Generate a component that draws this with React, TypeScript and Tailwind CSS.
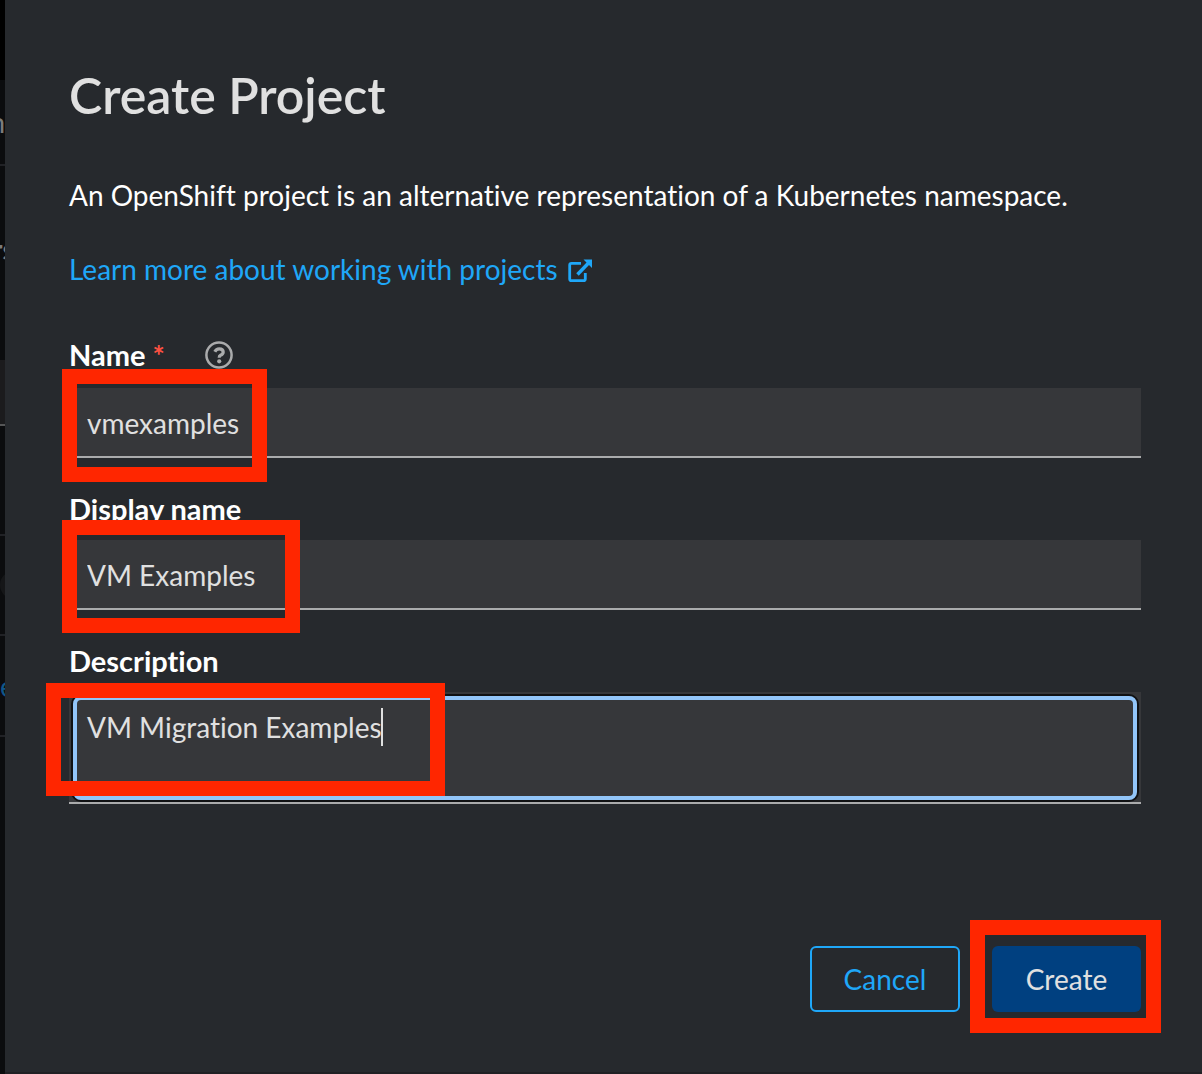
import React from "react";

function Highlight({ className }: { className: string }) {
  return (
    <div
      aria-hidden="true"
      className={`pointer-events-none absolute z-10 h-[113px] border-[15px] border-[#ff2600] ${className}`}
    />
  );
}

const fieldClass =
  "block w-full border-b-2 border-[#aaabac] bg-[#36373a] px-[18px] text-[28px] leading-[42px] text-[#e0e0e0] outline-none";
const labelClass = "font-bold text-[29px] leading-[42px] text-white";

function PageEdge() {
  return (
    <div
      aria-hidden="true"
      className="flex w-[5px] shrink-0 flex-col overflow-hidden bg-[#0b0c0e] text-[28px] leading-[42px]"
    >
      <div className="h-20 shrink-0 bg-black" />
      <div className="flex h-[86px] shrink-0 items-center justify-end border-b-2 border-[#212226] text-[#7c7c7c]">
        n
      </div>
      <div className="h-[194px] shrink-0 pt-[62px] font-bold text-[#7c7c7c]">
        <span className="-ml-2">rs</span>
      </div>
      <div className="h-[66px] shrink-0 border-b-2 border-[#555657] bg-[#1b1b1d]" />
      <div className="h-[110px] shrink-0 border-b-2 border-[#212226]" />
      <div className="flex h-[100px] shrink-0 items-center border-b-2 border-[#212226]">
        <div className="size-7 shrink-0 rounded-full bg-[#151618]" />
      </div>
      <div className="flex h-[101px] shrink-0 items-center border-b-2 border-[#212226] text-[#10568a]">e</div>
    </div>
  );
}

export default function App() {
  return (
    <div className="flex min-h-screen bg-[#26292d] font-['Lato','Noto_Sans',sans-serif] [font-variant-ligatures:none]">
      <PageEdge />
      <main
        role="dialog"
        aria-labelledby="dialog-title"
        className="min-w-0 flex-1 border-b-2 border-[#202024] pt-16 pr-[61px] pb-[60px] pl-16"
      >
        <h1 id="dialog-title" className="text-[50px] leading-[62px] font-semibold text-[#e0e0e0]">
          Create Project
        </h1>
        <p className="mt-12 text-[28px] leading-[42px] text-white">
          An OpenShift project is an alternative representation of a Kubernetes namespace.
        </p>
        <p className="mt-8 text-[28px] leading-[42px]">
          <a href="#projects" className="inline-flex items-center gap-[10px] text-[#1fa7f8]">
            Learn more about working with projects
            <svg viewBox="0 0 24 24" className="mt-1 size-6" fill="none" stroke="currentColor" aria-hidden="true">
              <path d="M13 4.300H3.500Q1.700 4.300 1.700 6V20Q1.700 21.700 3.500 21.700H15.500Q17.300 21.700 17.300 20V14" strokeWidth="2.800" />
              <path d="M9.500 15.500L20.500 4" strokeWidth="3.400" />
              <path d="M15.500 .5H24V9Z" fill="currentColor" stroke="none" />
            </svg>
          </a>
        </p>

        <form onSubmit={(e) => e.preventDefault()}>
          <div className="mt-[44px]">
            <div className="flex items-center">
              <label htmlFor="name" className={labelClass}>
                Name <span className="text-[#fe5142]">*</span>
              </label>
              <button type="button" aria-label="Help for name" className="ml-10 size-7 text-[#aaabac]">
                <svg viewBox="0 0 28 28" className="size-7" fill="none" stroke="currentColor" aria-hidden="true">
                  <circle cx="14" cy="14" r="12.600" strokeWidth="2.500" />
                  <path d="M9.800 10.700Q11.200 7.800 14.200 7.800Q18.200 7.800 18.200 11Q18.200 13.200 15.500 14.300Q14.200 14.900 14.200 16.800" strokeWidth="3.200" />
                  <circle cx="14.200" cy="20.300" r="2.100" fill="currentColor" stroke="none" />
                </svg>
              </button>
            </div>
            <div className="relative mt-3">
              <input id="name" required defaultValue="vmexamples" className={`${fieldClass} h-[70px] pt-0.5`} />
              <Highlight className="-top-[19px] -left-[7px] w-[205px]" />
            </div>
          </div>

          <div className="mt-[30px]">
            <label htmlFor="display-name" className={`${labelClass} block`}>
              Display name
            </label>
            <div className="relative mt-[10px]">
              <input id="display-name" defaultValue="VM Examples" className={`${fieldClass} h-[70px] pt-0.5`} />
              <Highlight className="-top-5 -left-[7px] w-[238px]" />
            </div>
          </div>

          <div className="mt-[30px]">
            <label htmlFor="description" className={`${labelClass} block`}>
              Description
            </label>
            <div className="relative mt-[10px]">
              <textarea
                id="description"
                defaultValue="VM Migration Examples"
                className={`${fieldClass} h-28 resize-none pt-[14px]`}
              />
              <div className="pointer-events-none absolute inset-1 rounded-lg border-4 border-[#92c5f9] ring-2 ring-[#101113]" />
              <div
                aria-hidden="true"
                className="pointer-events-none absolute top-4 left-[312px] h-[38px] w-0.5 bg-[#e0e0e0]"
              />
              <Highlight className="-top-[9px] -left-[23px] w-[399px]" />
            </div>
          </div>

          <div className="mt-[142px] flex justify-end gap-8 text-[28px] leading-[42px]">
            <button
              type="button"
              className="h-[66px] w-[150px] rounded-md border-2 border-[#1fa7f8] text-[#1fa7f8]"
            >
              Cancel
            </button>
            <div className="relative">
              <button type="submit" className="h-[66px] w-[149px] rounded-md bg-[#004080] text-[#e0e0e0]">
                Create
              </button>
              <Highlight className="-top-[26px] -left-[22px] w-[191px]" />
            </div>
          </div>
        </form>
      </main>
    </div>
  );
}
